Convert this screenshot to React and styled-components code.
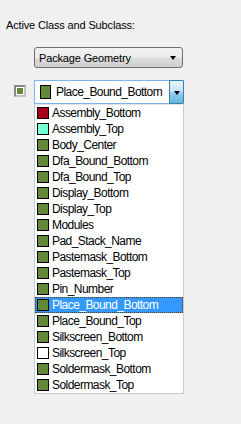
import React from 'react';
import styled, { createGlobalStyle } from 'styled-components';

const GlobalStyle = createGlobalStyle`
  html, body {
    margin: 0;
    padding: 0;
    background: #f0f0f0;
  }
  body {
    font-family: "Liberation Sans", Arial, sans-serif;
    width: 241px;
    height: 424px;
    overflow: hidden;
  }
`;

const GREEN = '#62893a';

const layers = [
  { name: 'Assembly_Bottom', color: '#a8001c' },
  { name: 'Assembly_Top', color: '#74ffd8' },
  { name: 'Body_Center', color: GREEN },
  { name: 'Dfa_Bound_Bottom', color: GREEN },
  { name: 'Dfa_Bound_Top', color: GREEN },
  { name: 'Display_Bottom', color: GREEN },
  { name: 'Display_Top', color: GREEN },
  { name: 'Modules', color: GREEN },
  { name: 'Pad_Stack_Name', color: GREEN },
  { name: 'Pastemask_Bottom', color: GREEN },
  { name: 'Pastemask_Top', color: GREEN },
  { name: 'Pin_Number', color: GREEN },
  { name: 'Place_Bound_Bottom', color: GREEN },
  { name: 'Place_Bound_Top', color: GREEN },
  { name: 'Silkscreen_Bottom', color: GREEN },
  { name: 'Silkscreen_Top', color: '#ffffff' },
  { name: 'Soldermask_Bottom', color: GREEN },
  { name: 'Soldermask_Top', color: GREEN },
];

const Panel = styled.div`
  display: flex;
  flex-direction: column;
  padding-top: 19px;
`;

const Label = styled.div`
  padding-left: 6px;
  font-size: 11px;
  line-height: 13px;
  color: #000;
  letter-spacing: -0.15px;
`;

const ClassCombo = styled.div`
  margin: 15px 0 0 34px;
  width: 149px;
  height: 21px;
  box-sizing: border-box;
  border: 1px solid #707070;
  border-radius: 3px;
  background: linear-gradient(#f3f3f3 0%, #ebebeb 50%, #dddddd 51%, #cfcfcf 100%);
  display: flex;
  align-items: center;
  justify-content: space-between;
  padding: 0 4px 0 4px;
  font-size: 11px;
  letter-spacing: -0.15px;
`;

const Arrow = styled.span`
  width: 0;
  height: 0;
  border-left: 3.5px solid transparent;
  border-right: 3.5px solid transparent;
  border-top: 4px solid #000;
  margin-right: 2px;
`;

const SubRow = styled.div`
  display: flex;
  align-items: flex-start;
  margin-top: 12px;
`;

const ColorWell = styled.div`
  margin: 5px 0 0 14px;
  width: 12px;
  height: 12px;
  box-sizing: border-box;
  border: 2px solid #868686;
  border-right-color: #c4c4c4;
  border-bottom-color: #c4c4c4;
  padding: 1px;
  background: #fff;
  & > span {
    display: block;
    width: 100%;
    height: 100%;
    background: ${GREEN};
  }
`;

const ComboColumn = styled.div`
  margin-left: 8px;
  display: flex;
  flex-direction: column;
  width: 150px;
`;

const SubCombo = styled.div`
  height: 24px;
  box-sizing: border-box;
  border: 1px solid #7eb4ea;
  background: #fff;
  display: flex;
  align-items: center;
  padding-left: 5px;
`;

const Swatch = styled.span`
  flex: none;
  box-sizing: border-box;
  width: ${p => p.$w}px;
  height: ${p => p.$h}px;
  border: 1px solid #000;
  background: ${p => p.$color};
`;

const ItemText = styled.span`
  font-size: 12px;
  letter-spacing: -0.55px;
  color: ${p => (p.$selected ? '#fff' : '#000')};
  white-space: nowrap;
`;

const ComboText = styled(ItemText)`
  margin-left: 5px;
  flex: 1;
`;

const DropButton = styled.div`
  align-self: stretch;
  width: 15px;
  margin: -1px -1px -1px 0;
  box-sizing: border-box;
  border: 1px solid #3c7fb1;
  border-radius: 0 2px 2px 0;
  background: linear-gradient(#e5f4fc 0%, #c4e5f6 50%, #98d1ef 51%, #68b3db 100%);
  display: flex;
  align-items: center;
  justify-content: center;
  & > ${Arrow} {
    margin: 2px 0 0 0;
  }
`;

const ListBox = styled.div`
  box-sizing: border-box;
  border: 1px solid #c5cbd5;
  border-top-color: #e0e4ea;
  background: #fff;
  padding: 0;
`;

const Item = styled.div`
  height: 16px;
  box-sizing: border-box;
  display: flex;
  align-items: center;
  gap: 3px;
  padding-left: 2px;
  background: ${p => (p.$selected ? '#3399ff' : 'transparent')};
  outline: ${p => (p.$selected ? '1px dotted #5a3a10' : 'none')};
  outline-offset: -1px;
`;

const App = () => (
  <>
    <GlobalStyle />
    <Panel>
      <Label>Active Class and Subclass:</Label>
      <ClassCombo>
        <span>Package Geometry</span>
        <Arrow />
      </ClassCombo>
      <SubRow>
        <ColorWell>
          <span />
        </ColorWell>
        <ComboColumn>
          <SubCombo>
            <Swatch $w={11} $h={14} $color={GREEN} />
            <ComboText>Place_Bound_Bottom</ComboText>
            <DropButton>
              <Arrow />
            </DropButton>
          </SubCombo>
          <ListBox>
            {layers.map(l => {
              const selected = l.name === 'Place_Bound_Bottom';
              return (
                <Item key={l.name} $selected={selected}>
                  <Swatch $w={12} $h={12} $color={l.color} />
                  <ItemText $selected={selected}>{l.name}</ItemText>
                </Item>
              );
            })}
          </ListBox>
        </ComboColumn>
      </SubRow>
    </Panel>
  </>
);

export default App;
